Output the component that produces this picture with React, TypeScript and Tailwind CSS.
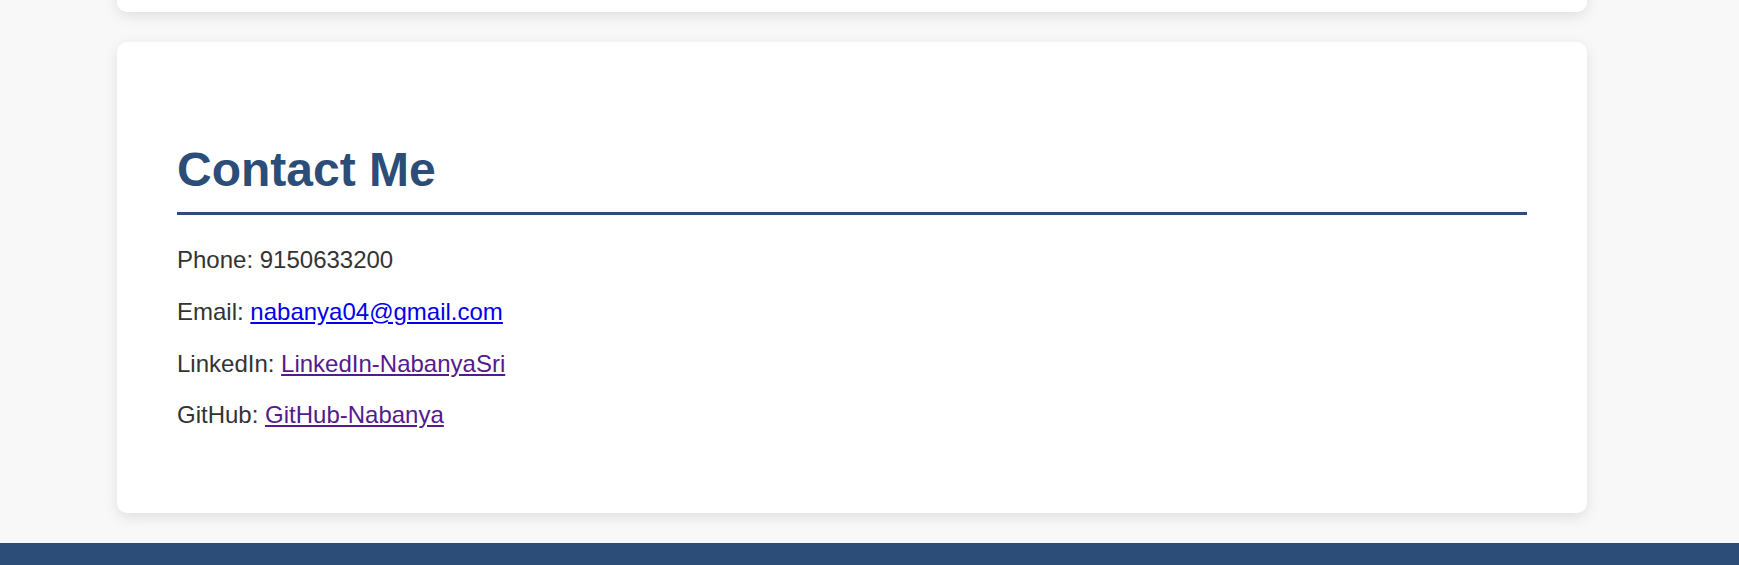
const contacts = [
  { label: "Email", text: "nabanya04@gmail.com", href: "mailto:nabanya04@gmail.com", visited: false },
  { label: "LinkedIn", text: "LinkedIn-NabanyaSri", href: "#linkedin", visited: true },
  { label: "GitHub", text: "GitHub-Nabanya", href: "#github", visited: true },
];

export default function App() {
  return (
    <div className="h-[565px] overflow-hidden bg-[#f8f8f8] flex flex-col font-['Liberation_Sans',Arial,sans-serif] text-[#333]">
      {/* previous section, scrolled mostly out of view */}
      <section className="shrink-0 ml-[117px] w-[1470px] h-[200px] -mt-[188px] bg-white rounded-[10px] shadow-[0_4px_14px_rgba(0,0,0,0.1)]" />

      <section className="shrink-0 ml-[117px] w-[1470px] mt-[30px] bg-white rounded-[10px] shadow-[0_4px_14px_rgba(0,0,0,0.1)] px-[60px] pt-[100px] pb-[60px]">
        <h2 className="text-[48px] leading-[56px] font-bold text-[#2c4d77] pb-[14px] border-b-[3px] border-[#2c4d77]">
          Contact Me
        </h2>
        <div className="mt-[31px] flex flex-col gap-[24px] text-[24px] leading-[27.8px]">
          <p>Phone: 9150633200</p>
          {contacts.map((c) => (
            <p key={c.label}>
              {c.label}:{" "}
              <a
                href={c.href}
                className={`underline ${c.visited ? "text-[#551a8b]" : "text-[#0000ee]"}`}
              >
                {c.text}
              </a>
            </p>
          ))}
        </div>
        <div className="h-[24px]" />
      </section>

      <footer className="shrink-0 mt-[30px] h-[80px] bg-[#2c4d77]" />
    </div>
  );
}
